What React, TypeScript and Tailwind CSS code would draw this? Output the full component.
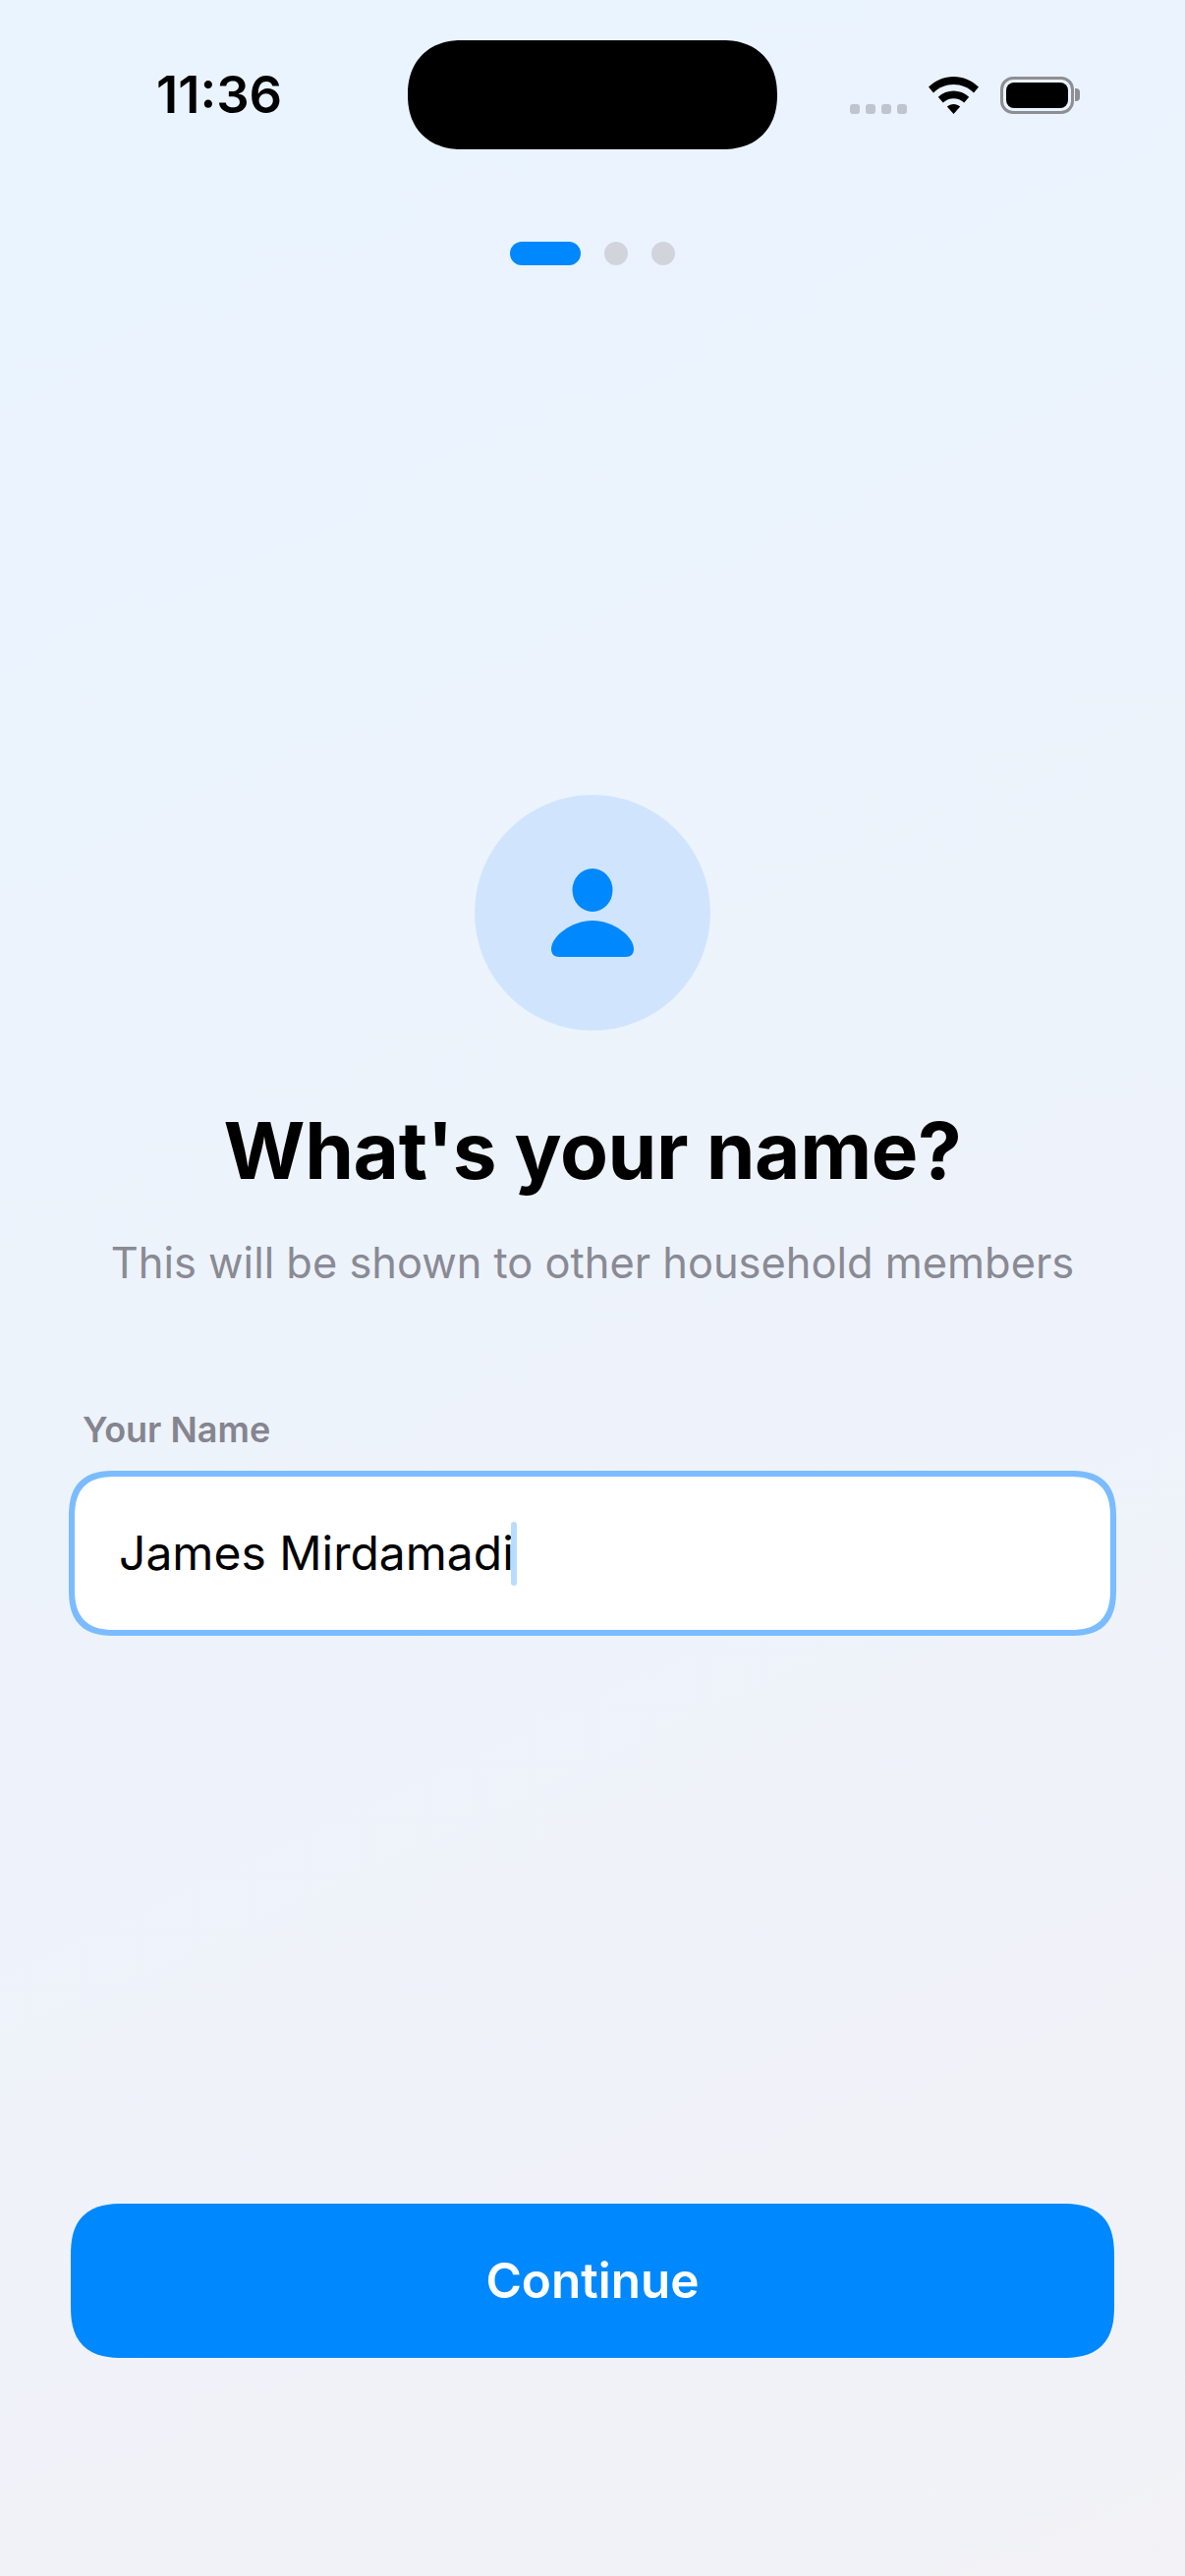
export default function App() {
  return (
    <div
      className="w-[1206px] h-[2622px] flex flex-col overflow-hidden bg-[linear-gradient(155.3deg,#e9f4ff,#f2f2f7)] text-black"
      style={{ fontFamily: "Inter, 'Noto Sans', sans-serif" }}
    >
      <div className="h-[246px] shrink-0 flex items-start pt-[41px]">
        <div className="w-[415px] h-[111px] flex items-center pl-[159px]">
          <span className="text-[52.5px] leading-none font-semibold">11:36</span>
        </div>
        <div className="w-[376px] h-[111px] rounded-[55px] [corner-shape:superellipse(1.15)] bg-black" />
        <div className="flex-1 h-[111px] flex items-center pl-[74px]">
          <div className="flex items-end h-[38px]">
            <div className="flex gap-[6px] pb-0">
              <span className="w-[10px] h-[10px] rounded-[3px] bg-[#bfc5cf]" />
              <span className="w-[10px] h-[10px] rounded-[3px] bg-[#bfc5cf]" />
              <span className="w-[10px] h-[10px] rounded-[3px] bg-[#bfc5cf]" />
              <span className="w-[10px] h-[10px] rounded-[3px] bg-[#bfc5cf]" />
            </div>
            <svg className="ml-[22px]" width="51" height="38" viewBox="0 0 51 38">
              <path d="M25.5 0C35 0 44 3.8 51 10.6L46 16.4C40.4 11 33.2 8 25.5 8S10.6 11 5 16.4L0 10.6C7 3.8 16 0 25.5 0Z" fill="#000" />
              <path d="M25.5 14.5C31.3 14.5 36.8 16.7 41.2 20.8L36.2 26.5C33.2 23.8 29.5 22.3 25.5 22.3S17.8 23.8 14.8 26.5L9.8 20.8C14.2 16.7 19.7 14.5 25.5 14.5Z" fill="#000" />
              <path d="M25.5 28C28 28 30.3 28.9 32.2 30.5L25.5 38L18.8 30.5C20.7 28.9 23 28 25.5 28Z" fill="#000" />
            </svg>
            <div className="ml-[22px] flex items-center h-[38px]">
              <div className="w-[75px] h-[38px] rounded-[13px] border-[3px] border-[#8e8e93] p-[3px]">
                <div className="w-full h-full rounded-[8px] bg-black" />
              </div>
              <span className="ml-[1px] w-[5px] h-[13px] rounded-r-[4px] bg-[#8e8e93]" />
            </div>
          </div>
        </div>
      </div>

      <div className="flex justify-center gap-[24px] shrink-0">
        <span className="w-[72px] h-[24px] rounded-[12px] bg-[#0088ff]" />
        <span className="w-[24px] h-[24px] rounded-full bg-[#d1d5db]" />
        <span className="w-[24px] h-[24px] rounded-full bg-[#d1d5db]" />
      </div>

      <div className="mt-[539px] shrink-0 flex flex-col items-center">
        <div className="w-[240px] h-[240px] rounded-full bg-[#d0e5fd] flex items-center justify-center">
          <svg width="84" height="90" viewBox="0 0 84 90">
            <ellipse cx="42" cy="22" rx="20.5" ry="22" fill="#0088ff" />
            <path d="M42 53C63 53 84 69 84 82C84 87 81 90 76 90H8C3 90 0 87 0 82C0 69 21 53 42 53Z" fill="#0088ff" />
          </svg>
        </div>
        <h1 className="mt-[70px] text-[80px] leading-[104px] font-bold tracking-[-0.4px] text-black">What's your name?</h1>
        <p className="mt-[34px] text-[43.4px] leading-[56px] text-[#8a8a94]">This will be shown to other household members</p>
      </div>

      <div className="mt-[120px] px-[70px] shrink-0">
        <div className="pl-[14px] text-[36px] leading-[44px] font-semibold text-[#85858f]">Your Name</div>
        <div className="mt-[20px] h-[168px] rounded-[48px] [corner-shape:superellipse(1.4)] border-[6px] border-[#7abcff] bg-white flex items-center pl-[45px]">
          <span className="text-[48px] leading-[60px] text-black">James Mirdamadi</span>
          <span className="-ml-[3px] w-[6px] h-[65px] rounded-[3px] bg-[#b8dcff]" />
        </div>
      </div>

      <div className="mt-[578px] px-[72px] shrink-0">
        <div className="h-[157px] rounded-[54px] [corner-shape:superellipse(1.4)] bg-[#0088ff] flex items-center justify-center">
          <span className="text-[49.5px] leading-none font-semibold text-white">Continue</span>
        </div>
      </div>
    </div>
  );
}
